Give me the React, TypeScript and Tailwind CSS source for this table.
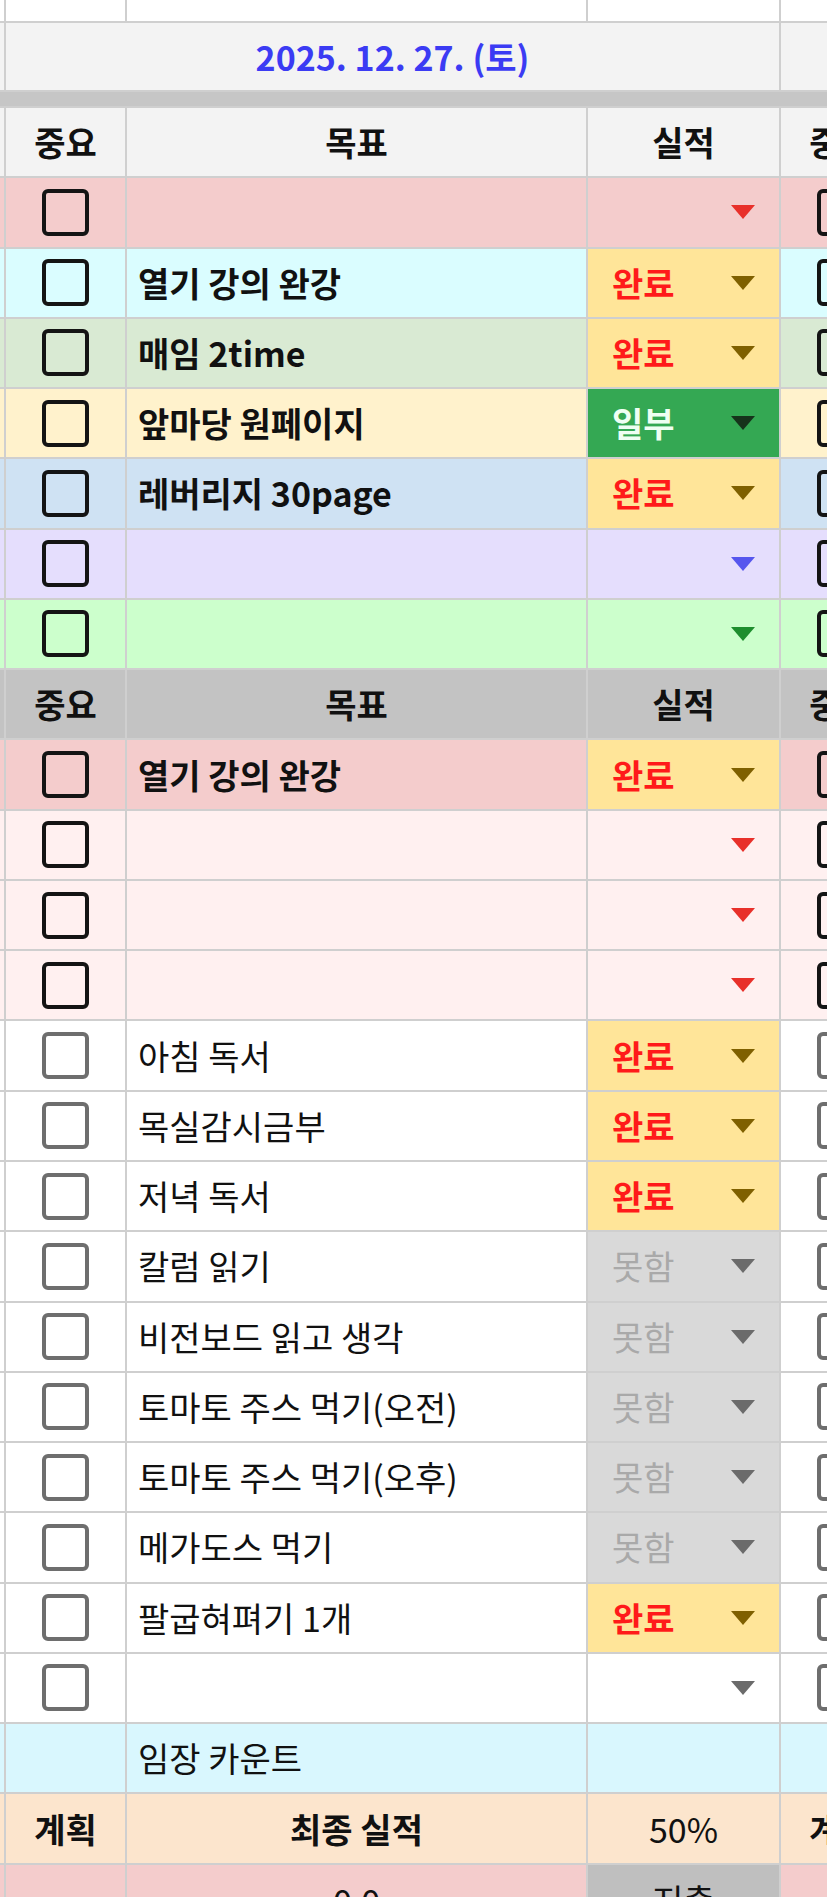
import React from 'react';

type Status = '완료' | '일부' | '못함' | null;

interface Row {
  bg: string;
  text?: string;
  status?: Status;
  tri?: string;
  bold?: boolean;
}

// column layout: left sliver | 중요 | 목표 | 실적 | next day (clipped)
const GRID = 'grid grid-cols-[4px_119px_459px_191px_46px] gap-x-[2px] shrink-0';
const ROW_H = 'h-[68.28px]';

const topRows: Row[] = [
  { bg: 'bg-[#f4cccc]', tri: '#e8302a', bold: true },
  { bg: 'bg-[#dafdff]', text: '열기 강의 완강', status: '완료', bold: true },
  { bg: 'bg-[#d9ead3]', text: '매임 2time', status: '완료', bold: true },
  { bg: 'bg-[#fff2cc]', text: '앞마당 원페이지', status: '일부', bold: true },
  { bg: 'bg-[#cfe2f3]', text: '레버리지 30page', status: '완료', bold: true },
  { bg: 'bg-[#e5defd]', tri: '#5656ee', bold: true },
  { bg: 'bg-[#ccffcc]', tri: '#1e8e2e', bold: true },
];

const bottomRows: Row[] = [
  { bg: 'bg-[#f4cccc]', text: '열기 강의 완강', status: '완료', bold: true },
  { bg: 'bg-[#fff0f0]', tri: '#e8302a', bold: true },
  { bg: 'bg-[#fff0f0]', tri: '#e8302a', bold: true },
  { bg: 'bg-[#fff0f0]', tri: '#e8302a', bold: true },
  { bg: 'bg-white', text: '아침 독서', status: '완료' },
  { bg: 'bg-white', text: '목실감시금부', status: '완료' },
  { bg: 'bg-white', text: '저녁 독서', status: '완료' },
  { bg: 'bg-white', text: '칼럼 읽기', status: '못함' },
  { bg: 'bg-white', text: '비전보드 읽고 생각', status: '못함' },
  { bg: 'bg-white', text: '토마토 주스 먹기(오전)', status: '못함' },
  { bg: 'bg-white', text: '토마토 주스 먹기(오후)', status: '못함' },
  { bg: 'bg-white', text: '메가도스 먹기', status: '못함' },
  { bg: 'bg-white', text: '팔굽혀펴기 1개', status: '완료' },
  { bg: 'bg-white', tri: '#6b6b6b' },
];

const Tri = ({ color }: { color: string }) => (
  <svg width="24" height="14" viewBox="0 0 24 14" className="shrink-0">
    <polygon points="0,0 24,0 12,14" fill={color} />
  </svg>
);

const Checkbox = ({ bold }: { bold?: boolean }) => (
  <div
    className={`w-[47px] h-[47px] rounded-[6px] border-[4px] ${
      bold ? 'border-[#141414]' : 'border-[#6e6e6e]'
    }`}
  />
);

// the next day's column, cut off by the screen edge
const Clipped = ({ bg, children }: { bg: string; children?: React.ReactNode }) => (
  <div className={`${bg} overflow-hidden`}>
    <div className="w-[119px] h-full flex items-center justify-center">{children}</div>
  </div>
);

const StatusCell = ({ row }: { row: Row }) => {
  const s = row.status;
  if (s === '완료')
    return (
      <div className="bg-[#ffe599] flex items-center justify-between px-[24px]">
        <span className="text-[#ff1a1a] font-bold">완료</span>
        <Tri color="#7f6000" />
      </div>
    );
  if (s === '일부')
    return (
      <div className="bg-[#34a853] flex items-center justify-between px-[24px]">
        <span className="text-[#effff3] font-bold">일부</span>
        <Tri color="#16331b" />
      </div>
    );
  if (s === '못함')
    return (
      <div className="bg-[#d9d9d9] flex items-center justify-between px-[24px]">
        <span className="text-[#a9a9a9]">못함</span>
        <Tri color="#6b6b6b" />
      </div>
    );
  return (
    <div className={`${row.bg} flex items-center justify-end px-[24px]`}>
      <Tri color={row.tri || '#6b6b6b'} />
    </div>
  );
};

const ItemRow = ({ row }: { row: Row }) => (
  <div className={`${GRID} ${ROW_H}`}>
    <div className={row.bg} />
    <div className={`${row.bg} flex items-center justify-center`}>
      <Checkbox bold={row.bold} />
    </div>
    <div className={`${row.bg} flex items-center pl-[11px] whitespace-nowrap ${row.bold ? 'font-bold' : ''}`}>
      {row.text}
    </div>
    <StatusCell row={row} />
    <Clipped bg={row.bg}>
      <Checkbox bold={row.bold} />
    </Clipped>
  </div>
);

const HeaderRow = ({ bg }: { bg: string }) => (
  <div className={`${GRID} ${ROW_H} font-bold`}>
    <div className={bg} />
    <div className={`${bg} flex items-center justify-center`}>중요</div>
    <div className={`${bg} flex items-center justify-center`}>목표</div>
    <div className={`${bg} flex items-center justify-center`}>실적</div>
    <Clipped bg={bg}>중요</Clipped>
  </div>
);

export default function App() {
  return (
    <div className="w-[827px] h-[1897px] overflow-hidden bg-[#cfcfcf] flex flex-col gap-y-[2px] font-['Noto_Sans_CJK_KR','Noto_Sans',sans-serif] text-[34px] leading-none text-[#111]">
      {/* previous block's last row */}
      <div className={`${GRID} h-[21px]`}>
        <div className="bg-white" />
        <div className="bg-white" />
        <div className="bg-white" />
        <div className="bg-white" />
        <div className="bg-white" />
      </div>

      {/* date */}
      <div className="grid grid-cols-[4px_773px_46px] gap-x-[2px] h-[67px] shrink-0">
        <div className="bg-[#f3f3f3]" />
        <div className="bg-[#f3f3f3] flex items-center justify-center text-[#3b3bf3] font-bold">
          2025. 12. 27. (토)
        </div>
        <div className="bg-[#f3f3f3]" />
      </div>
      <div className="h-[14px] shrink-0 bg-[#c6c6c6]" />

      <HeaderRow bg="bg-[#f3f3f3]" />
      {topRows.map((r, i) => (
        <ItemRow key={'t' + i} row={r} />
      ))}

      <HeaderRow bg="bg-[#c3c3c3]" />
      {bottomRows.map((r, i) => (
        <ItemRow key={'b' + i} row={r} />
      ))}

      {/* 임장 카운트 */}
      <div className={`${GRID} ${ROW_H}`}>
        <div className="bg-[#d9f7fe]" />
        <div className="bg-[#d9f7fe]" />
        <div className="bg-[#d9f7fe] flex items-center pl-[11px]">임장 카운트</div>
        <div className="bg-[#d9f7fe]" />
        <div className="bg-[#d9f7fe]" />
      </div>

      {/* summary */}
      <div className={`${GRID} ${ROW_H}`}>
        <div className="bg-[#fce5cd]" />
        <div className="bg-[#fce5cd] flex items-center justify-center font-bold">계획</div>
        <div className="bg-[#fce5cd] flex items-center justify-center font-bold">최종 실적</div>
        <div className="bg-[#fce5cd] flex items-center justify-center">50%</div>
        <Clipped bg="bg-[#fce5cd]">
          <span className="font-bold">계획</span>
        </Clipped>
      </div>

      <div className={`${GRID} h-[70px]`}>
        <div className="bg-[#f4cccc]" />
        <div className="bg-[#f4cccc]" />
        <div className="bg-[#f4cccc] flex items-center justify-center">0.0</div>
        <div className="bg-[#bfbfbf] flex items-center justify-center">지출</div>
        <div className="bg-[#f4cccc]" />
      </div>
    </div>
  );
}
